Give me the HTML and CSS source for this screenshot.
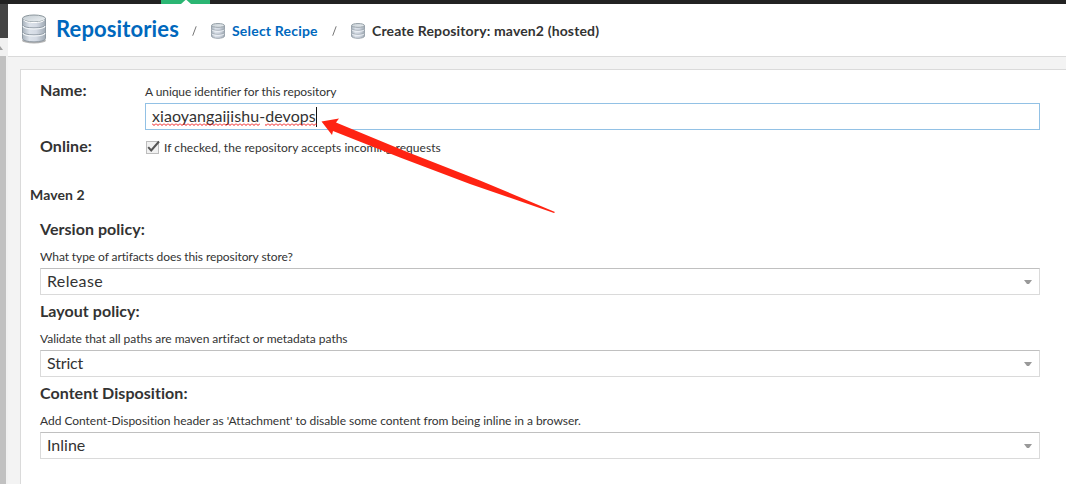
FILE: index.html
```html
<!DOCTYPE html>
<html lang="en">
<head>
<meta charset="utf-8">
<title>Create Repository</title>
<link rel="stylesheet" href="styles.css">
</head>
<body>
<svg width="0" height="0" class="defs" aria-hidden="true">
  <defs>
    <linearGradient id="metal" x1="0" x2="1" y1="0" y2="0">
      <stop offset="0" stop-color="#a9b3bd"/><stop offset=".3" stop-color="#dce2ea"/>
      <stop offset=".6" stop-color="#d4dae4"/><stop offset="1" stop-color="#a0aab4"/>
    </linearGradient>
    <linearGradient id="lid" x1="0" x2="1" y1="0" y2="1">
      <stop offset="0" stop-color="#c3ccd2"/><stop offset="1" stop-color="#edf1f4"/>
    </linearGradient>
    <symbol id="db" viewBox="0 0 26 30">
      <ellipse cx="13" cy="26.500" rx="12" ry="3" fill="#777" opacity=".55"/>
      <path d="M1.500 4.500V24.500c0 4.500 23 4.500 23 0V4.500z" fill="url(#metal)" stroke="#8f99a2" stroke-width="1"/>
      <path d="M1.500 11c0 3.800 23 3.800 23 0M1.500 18c0 3.800 23 3.800 23 0" fill="none" stroke="#949ea8" stroke-width="1"/>
      <path d="M2 12.100c0 3.800 22 3.800 22 0M2 19.100c0 3.800 22 3.800 22 0" fill="none" stroke="#f5f8fa" stroke-width="1.100"/>
      <ellipse cx="13" cy="4.500" rx="11.500" ry="3.500" fill="url(#lid)" stroke="#8b969c" stroke-width="1"/>
      <path d="M2.500 5.800c1 3.700 20 3.700 21 0" fill="none" stroke="#fff" stroke-width="1"/>
    </symbol>
    <symbol id="db-small" viewBox="0 0 14 16">
      <path d="M.5 2.500v10.500c0 3 13 3 13 0V2.500z" fill="url(#metal)" stroke="#99a3ac" stroke-width="1"/>
      <path d="M1 5.800c0 2 12 2 12 0M1 9.800c0 2 12 2 12 0" fill="none" stroke="#a0aab3"/>
      <path d="M1 6.800c0 2 12 2 12 0M1 10.800c0 2 12 2 12 0" fill="none" stroke="#f4f7fa" stroke-width=".9"/>
      <ellipse cx="7" cy="2.400" rx="6.400" ry="1.900" fill="url(#lid)" stroke="#99a3aa"/>
    </symbol>
  </defs>
</svg>
<div class="app">
  <div class="topbar"><div class="tab"><svg width="10" height="4" viewBox="0 0 10 4"><path d="M0 4L5-.5 10 4z" fill="#fff"/></svg></div></div>
  <div class="body">
    <aside class="side">
      <div class="side-head"></div>
      <div class="scroll-up"><svg width="3" height="4" viewBox="0 0 3 4"><path d="M0 0L3 4H0z" fill="#a0a0a0"/></svg></div>
      <div class="thumb"></div>
    </aside>
    <main class="main">
      <header class="crumbs">
        <svg class="icon-big"><use href="#db"/></svg>
        <a class="title">Repositories</a>
        <svg class="slash" viewBox="0 0 5 10"><path d="M.7 9.700L4.200.3" stroke="#777" fill="none"/></svg>
        <svg class="icon-small"><use href="#db-small"/></svg>
        <a class="crumb link">Select Recipe</a>
        <svg class="slash" viewBox="0 0 5 10"><path d="M.7 9.700L4.200.3" stroke="#777" fill="none"/></svg>
        <svg class="icon-small"><use href="#db-small"/></svg>
        <span class="crumb current">Create Repository: maven2 (hosted)</span>
      </header>
      <section class="panel">
        <div class="row name-row">
          <div class="label">Name:</div>
          <div class="field">
            <div class="help h-name">A unique identifier for this repository</div>
            <div class="input focus"><span class="value v-name">xiaoyangaijishu-devops</span><i class="caret"></i>
              <svg class="squiggle" width="165" height="3"><defs><pattern id="wave" width="4" height="3" patternUnits="userSpaceOnUse"><path d="M0 .5L2 2.500 4 .5" fill="none" stroke="#f01414" stroke-width="1"/></pattern></defs><path d="M0 0h108v3H0zM113 0h52v3h-52z" fill="url(#wave)"/></svg>
            </div>
          </div>
        </div>
        <div class="row online-row">
          <div class="label">Online:</div>
          <div class="check"><svg class="box" width="14" height="15" viewBox="0 0 14 15"><rect x=".5" y="1.500" width="12" height="12" fill="#f1f1f1" stroke="#bdbdbd"/><path d="M2.200 7.200L5.200 10.500 13 1.500" fill="none" stroke="#555" stroke-width="2"/></svg><span class="help h-online">If checked, the repository accepts incoming requests</span></div>
        </div>
        <h2 class="group">Maven 2</h2>
        <div class="block">
          <div class="label">Version policy:</div>
          <div class="help h-version">What type of artifacts does this repository store?</div>
          <div class="input select"><span class="value v-release">Release</span><svg class="arrow" width="8" height="4"><path d="M0 0h8L5 4H3z" fill="#999"/></svg></div>
        </div>
        <div class="block">
          <div class="label">Layout policy:</div>
          <div class="help h-content">Validate that all paths are maven artifact or metadata paths</div>
          <div class="input select"><span class="value v-strict">Strict</span><svg class="arrow" width="8" height="4"><path d="M0 0h8L5 4H3z" fill="#999"/></svg></div>
        </div>
        <div class="block">
          <div class="label">Content Disposition:</div>
          <div class="help h-content">Add Content-Disposition header as 'Attachment' to disable some content from being inline in a browser.</div>
          <div class="input select"><span class="value">Inline</span><svg class="arrow" width="8" height="4"><path d="M0 0h8L5 4H3z" fill="#999"/></svg></div>
        </div>
      </section>
    </main>
  </div>
  <svg class="pointer" width="236" height="96" viewBox="320 118 236 96"><path d="M321.500 121.500L339 118.500 336 122.500 406 151.500 480 180.500 555 212 554 213 470 184 400 157.500 333 131 332 135z" fill="#ff2312"/></svg>
</div>
</body>
</html>
```
FILE: styles.css
```css
* { box-sizing: border-box; }
body { margin: 0; background: #fff; color: #333; font-family: Lato, "Open Sans", sans-serif; font-variant-ligatures: none; overflow: hidden; }
.defs { position: absolute; }
.app { position: relative; width: 1066px; height: 484px; display: flex; flex-direction: column; overflow: hidden; }
.topbar { height: 4px; background: #222; flex: none; padding-left: 161px; }
.tab { width: 49px; height: 4px; background: #2bb673; display: flex; justify-content: center; }
.body { flex: 1; display: flex; min-height: 0; }
.side { width: 8px; background: #f1f1f1; display: flex; flex-direction: column; }
.side-head { height: 34px; background: #444; }
.scroll-up { height: 18px; padding-top: 8px; display: flex; }
.thumb { flex: 1; width: 6px; background: #c1c1c1; }
.main { flex: 1; background: #f3f3f3; display: flex; flex-direction: column; min-width: 0; }
.crumbs { height: 53px; flex: none; background: #fff; border-bottom: 1px solid #dadada; display: flex; align-items: flex-start; white-space: nowrap; padding-left: 13px; }
.icon-big { width: 26px; height: 30px; margin-top: 10px; flex: none; }
.icon-small { width: 14px; height: 16px; margin-top: 19px; flex: none; }
.title { width: 136px; margin-left: 9px; margin-top: 9px; line-height: 32px; font-size: 22px; font-weight: 700; letter-spacing: .12px; color: #0068bd; }
.slash { width: 5px; height: 10px; margin: 22px 14px 0 0; flex: none; }
.crumb { font-size: 14px; font-weight: 700; line-height: 20px; letter-spacing: .14px; margin-top: 17px; margin-left: 7px; }
.link { color: #0068bd; width: 100px; letter-spacing: .2px; }
.current { color: #333; }
.panel { margin: 12px 0 0 12px; flex: 1; background: #fff; border: solid #dadada; border-width: 1px 0 0 1px; padding: 11px 26px 0 19px; white-space: nowrap; }
.row { display: flex; }
.label { font-size: 16px; font-weight: 700; line-height: 20px; letter-spacing: .05px; }
.row .label { width: 105px; flex: none; margin-top: -1px; }
.name-row { height: 56px; }
.online-row { height: 48px; }
.field { flex: 1; padding-top: 3px; }
.help { font-size: 12px; line-height: 16px; }
.h-name { letter-spacing: -.07px; }
.h-online { letter-spacing: .04px; padding-top: 1px; }
.h-version { letter-spacing: -.09px; }
.h-content { letter-spacing: -.03px; }
.input { height: 27px; border: 1px solid #dadada; border-top-color: #c0c0c0; padding: 0 7px 0 6px; font-size: 16px; line-height: 23px; display: flex; align-items: center; }
.value { padding-bottom: 2px; }
.input.focus { border-color: #92c1e5; margin-top: 3px; position: relative; }
.v-name { letter-spacing: .07px; }
.v-release { letter-spacing: .35px; }
.v-strict { letter-spacing: -.15px; }
.caret { width: 1px; height: 20px; background: #111; }
.squiggle { position: absolute; left: 6px; top: 19px; }
.check { display: flex; padding-top: 2px; }
.box { margin: 1px 4px 0 1px; }
.group { margin: 0 0 14px -10px; font-size: 14px; line-height: 20px; font-weight: 700; letter-spacing: .1px; }
.block { height: 82px; }
.block .help { margin-top: 10px; }
.block .input { margin-top: 3px; }
.select { justify-content: space-between; }
.arrow { position: relative; top: .5px; }
.pointer { position: absolute; left: 320px; top: 118px; }
```
